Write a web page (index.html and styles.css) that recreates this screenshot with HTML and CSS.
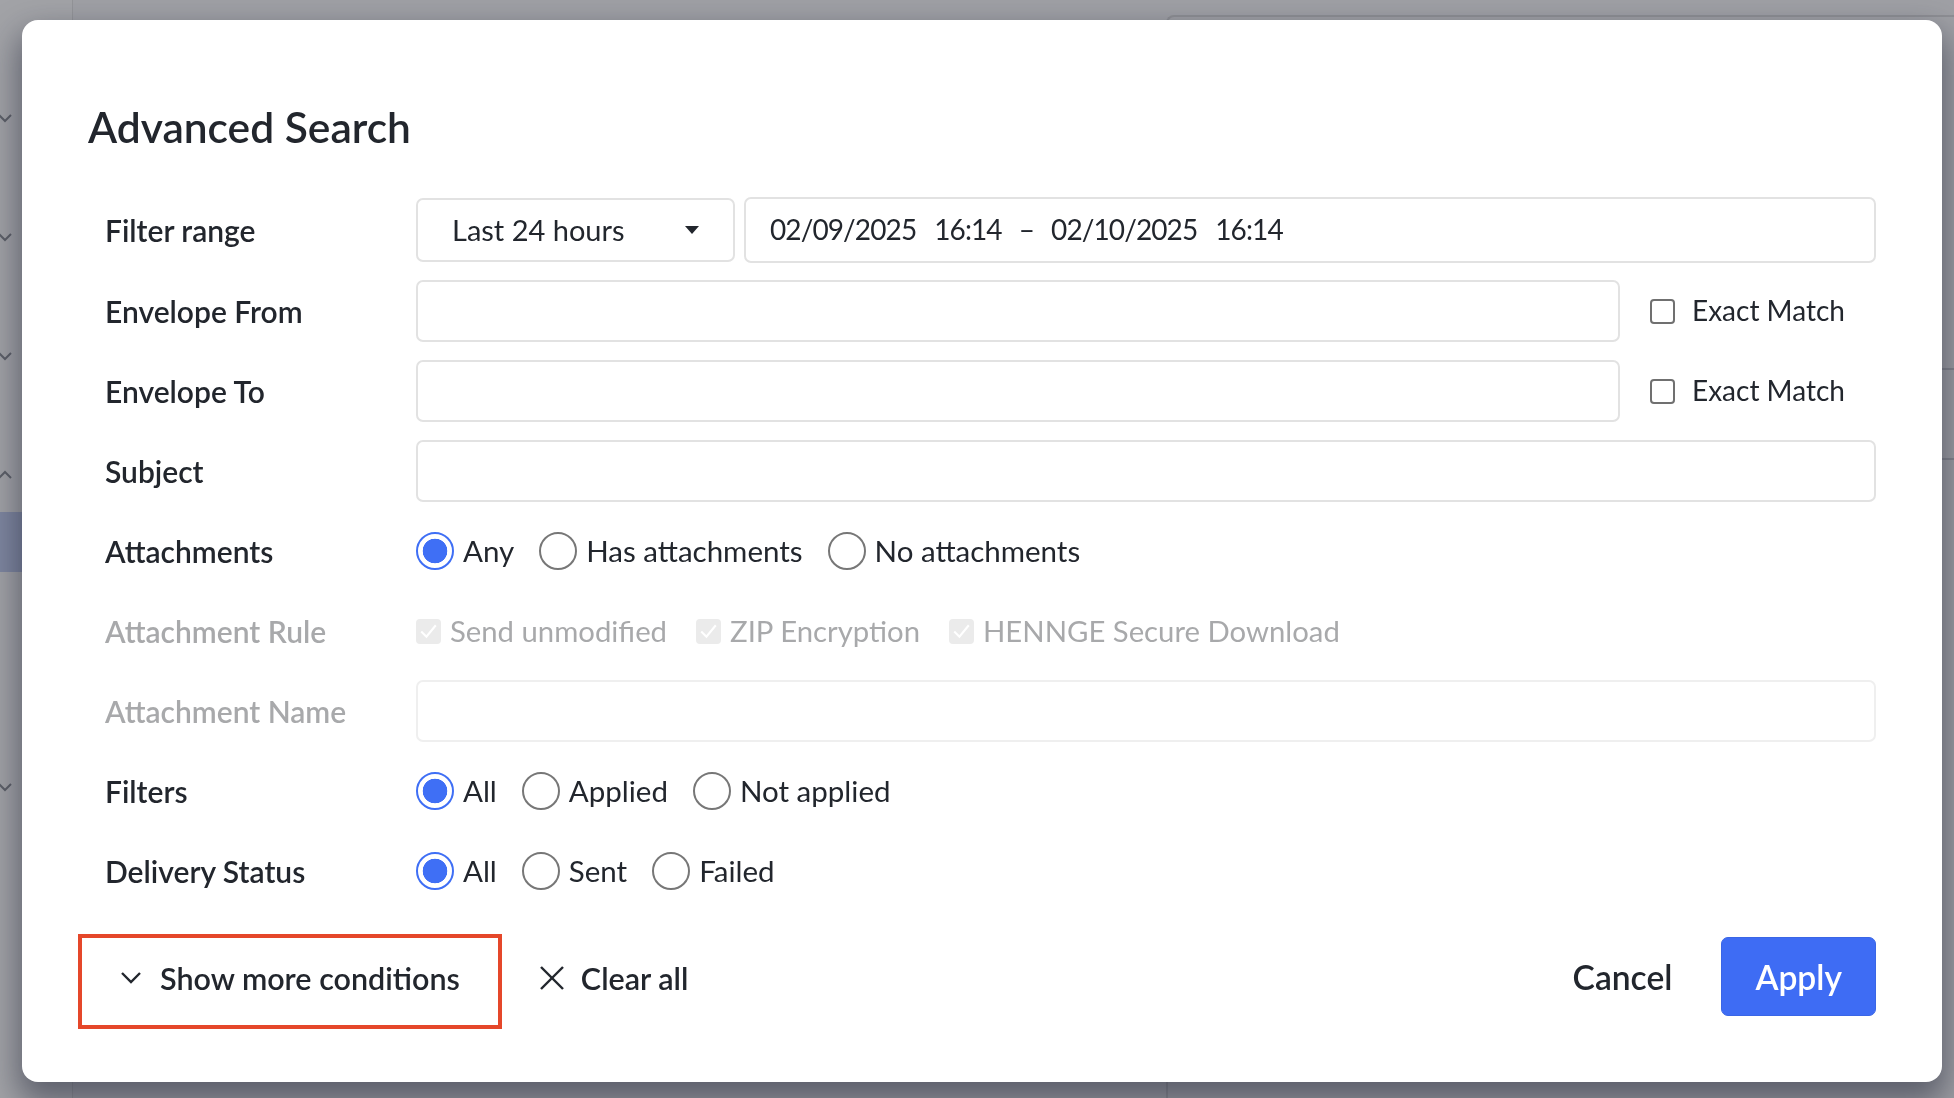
FILE: index.html
```html
<!DOCTYPE html>
<html>
<head>
    <title>Advanced Search</title>
    <link rel="stylesheet" href="styles.css">
</head>
<body>
    <div class="app">
        <aside class="sidebar">
            <svg class="side-chevron first" viewBox="0 0 14 10"><polyline points="1,2 7,8 13,2"/></svg>
            <svg class="side-chevron" viewBox="0 0 14 10"><polyline points="1,2 7,8 13,2"/></svg>
            <svg class="side-chevron" viewBox="0 0 14 10"><polyline points="1,2 7,8 13,2"/></svg>
            <svg class="side-chevron" viewBox="0 0 14 10"><polyline points="1,8 7,2 13,8"/></svg>
            <div class="side-band"></div>
            <svg class="side-chevron last" viewBox="0 0 14 10"><polyline points="1,2 7,8 13,2"/></svg>
        </aside>
        <main class="main">
            <div class="bg-card">
                <div class="bg-row tall"></div>
                <div class="bg-row"></div>
            </div>
        </main>
    </div>

    <div class="modal">
        <h1 class="modal-title">Advanced Search</h1>

        <div class="form">
            <div class="row first">
                <div class="label">Filter range</div>
                <div class="control">
                    <div class="select">
                        <span>Last 24 hours</span>
                        <span class="caret"></span>
                    </div>
                    <div class="date-range">
                        <span>02/09/2025</span><span class="time">16:14</span>
                        <span class="dash">&ndash;</span>
                        <span>02/10/2025</span><span class="time">16:14</span>
                    </div>
                </div>
            </div>

            <div class="row">
                <div class="label">Envelope From</div>
                <div class="control">
                    <input class="text-input" type="text">
                    <label class="exact"><input class="checkbox" type="checkbox"> Exact Match</label>
                </div>
            </div>

            <div class="row">
                <div class="label">Envelope To</div>
                <div class="control">
                    <input class="text-input" type="text">
                    <label class="exact"><input class="checkbox" type="checkbox"> Exact Match</label>
                </div>
            </div>

            <div class="row">
                <div class="label">Subject</div>
                <div class="control">
                    <input class="text-input" type="text">
                </div>
            </div>

            <div class="row">
                <div class="label">Attachments</div>
                <div class="control options">
                    <label class="option"><input class="radio" type="radio" name="att" checked>Any</label>
                    <label class="option"><input class="radio" type="radio" name="att">Has attachments</label>
                    <label class="option"><input class="radio" type="radio" name="att">No attachments</label>
                </div>
            </div>

            <div class="row disabled">
                <div class="label">Attachment Rule</div>
                <div class="control options rules">
                    <span class="option rule">
                        <span class="fake-check"><svg viewBox="0 0 24 24"><polyline points="5,12 10,17 19,6"/></svg></span>Send unmodified
                    </span>
                    <span class="option rule">
                        <span class="fake-check"><svg viewBox="0 0 24 24"><polyline points="5,12 10,17 19,6"/></svg></span>ZIP Encryption
                    </span>
                    <span class="option rule">
                        <span class="fake-check"><svg viewBox="0 0 24 24"><polyline points="5,12 10,17 19,6"/></svg></span>HENNGE Secure Download
                    </span>
                </div>
            </div>

            <div class="row disabled">
                <div class="label">Attachment Name</div>
                <div class="control">
                    <input class="text-input" type="text" disabled>
                </div>
            </div>

            <div class="row">
                <div class="label">Filters</div>
                <div class="control options">
                    <label class="option"><input class="radio" type="radio" name="flt" checked>All</label>
                    <label class="option"><input class="radio" type="radio" name="flt">Applied</label>
                    <label class="option"><input class="radio" type="radio" name="flt">Not applied</label>
                </div>
            </div>

            <div class="row">
                <div class="label">Delivery Status</div>
                <div class="control options">
                    <label class="option"><input class="radio" type="radio" name="dlv" checked>All</label>
                    <label class="option"><input class="radio" type="radio" name="dlv">Sent</label>
                    <label class="option"><input class="radio" type="radio" name="dlv">Failed</label>
                </div>
            </div>
        </div>

        <div class="footer">
            <button class="link-btn more-btn">
                <svg class="icon" viewBox="0 0 22 14"><polyline points="2,2 11,11 20,2"/></svg>
                Show more conditions
            </button>
            <button class="link-btn clear-btn">
                <svg class="icon x-icon" viewBox="0 0 26 26"><line x1="2" y1="2" x2="24" y2="24"/><line x1="24" y1="2" x2="2" y2="24"/></svg>
                Clear all
            </button>
            <div class="spacer"></div>
            <button class="cancel-btn">Cancel</button>
            <button class="apply-btn">Apply</button>
        </div>
    </div>
</body>
</html>
```

FILE: styles.css
```css
body {
    margin: 0;
    background-color: #9fa0a5;
    font-family: "Lato", "Noto Sans", sans-serif;
    color: #22262d;
    height: 100vh;
    overflow: hidden;
    line-height: 1.2;
}

/* page behind the dialog */

.app {
    display: flex;
    height: 100%;
}

.sidebar {
    width: 72px;
    background-color: #a2a3a7;
    border-right: 1px solid #939498;
    display: flex;
    flex-direction: column;
}

.side-chevron {
    width: 14px;
    height: 10px;
    margin-top: 109px;
    margin-left: -2px;
    fill: none;
    stroke: #5d6068;
    stroke-width: 2;
}

.side-chevron.first {
    margin-top: 113px;
}

.side-chevron.last {
    margin-top: 210px;
}

.side-band {
    height: 60px;
    margin-top: 32px;
    background-color: #7f87a0;
}

.main {
    flex: 1;
}

.bg-card {
    margin: 15px 0 0 1093px;
    height: 100%;
    border-top: 2px solid #8e8f94;
    border-left: 2px solid #8e8f94;
    border-top-left-radius: 8px;
}

.bg-row {
    height: 88px;
    border-bottom: 2px solid #85878e;
}

.bg-row.tall {
    height: 351px;
}

/* dialog */

.modal {
    position: fixed;
    left: 22px;
    top: 20px;
    width: 1920px;
    height: 1062px;
    box-sizing: border-box;
    padding: 0 66px 0 62px;
    background-color: #fff;
    border-radius: 16px;
    box-shadow: 0 16px 32px 4px rgba(25, 30, 50, 0.5);
}

.modal-title {
    margin: 81px 0 0 4px;
    font-size: 42.5px;
    font-weight: 600;
    line-height: 1.2;
}

.form {
    margin: 46px 0 0 21px;
    display: flex;
    flex-direction: column;
    gap: 18px;
}

.row {
    display: flex;
    align-items: center;
    height: 62px;
}

.row.first {
    height: 64px;
}

.label {
    width: 311px;
    flex-shrink: 0;
    font-size: 30px;
    font-weight: 600;
}

.row.disabled .label {
    color: #a8a9ab;
}

.control {
    flex: 1;
    display: flex;
    align-items: center;
    height: 100%;
}

.select {
    width: 319px;
    height: 64px;
    box-sizing: border-box;
    padding: 0 35px 0 34px;
    display: flex;
    align-items: center;
    justify-content: space-between;
    border: 2px solid #e2e2e2;
    border-radius: 7px;
    font-size: 29px;
}

.caret {
    width: 0;
    height: 0;
    margin-right: -1px;
    border-left: 7px solid transparent;
    border-right: 7px solid transparent;
    border-top: 8px solid #22262d;
}

.date-range {
    flex: 1;
    height: 66px;
    margin-left: 9px;
    box-sizing: border-box;
    padding: 0 24px;
    display: flex;
    align-items: center;
    border: 2px solid #e2e2e2;
    border-radius: 7px;
    font-size: 28px;
    letter-spacing: -0.9px;
}

.date-range .time {
    margin-left: 18px;
}

.date-range .dash {
    margin: 0 17px;
}

.text-input {
    flex: 1;
    height: 62px;
    box-sizing: border-box;
    margin: 0;
    border: 2px solid #e2e2e2;
    border-radius: 7px;
    outline: none;
    font-family: inherit;
    font-size: 29px;
}

.text-input:disabled {
    background-color: #fff;
    border-color: #efefef;
}

.exact {
    width: 226px;
    margin-left: 30px;
    display: flex;
    align-items: center;
    gap: 17px;
    font-size: 28px;
}

.checkbox {
    appearance: none;
    margin: 0;
    width: 25px;
    height: 25px;
    box-sizing: border-box;
    border: 2px solid #707070;
    border-radius: 4px;
}

.options {
    gap: 25px;
}

.options.rules {
    gap: 29px;
}

.option {
    display: flex;
    align-items: center;
    gap: 9px;
    font-size: 29.5px;
}

.rule {
    font-size: 29.3px;
}

.radio {
    appearance: none;
    margin: 0;
    width: 38px;
    height: 38px;
    box-sizing: border-box;
    border: 2px solid #777;
    border-radius: 50%;
    background-color: #fff;
}

.radio:checked {
    border-color: #3f6ff5;
    background: radial-gradient(circle, #3f6ff5 0, #3f6ff5 12px, #fff 12.6px);
}

.rule {
    color: #a8a9ab;
}

.fake-check {
    width: 25px;
    height: 25px;
    border-radius: 4px;
    background-color: #ebebeb;
    display: flex;
}

.fake-check svg {
    width: 25px;
    height: 25px;
    fill: none;
    stroke: #fff;
    stroke-width: 2;
}

/* footer */

.footer {
    display: flex;
    align-items: center;
    margin: 32px 0 0 -6px;
}

.link-btn {
    display: flex;
    align-items: center;
    background: none;
    border: none;
    padding: 0;
    color: #22262d;
    font-family: inherit;
    font-size: 30.5px;
    font-weight: 600;
    cursor: pointer;
}

.icon {
    fill: none;
    stroke: #22262d;
    stroke-width: 2.4;
}

.more-btn {
    height: 95px;
    box-sizing: border-box;
    padding: 0 38px 8px 38px;
    gap: 18px;
    border: 4px solid #e5472a;
}

.more-btn .icon {
    width: 22px;
    height: 14px;
}

.clear-btn {
    margin: 0 0 8px 37px;
    gap: 16px;
}

.x-icon {
    width: 26px;
    height: 26px;
}

.spacer {
    flex: 1;
}

.cancel-btn {
    margin-bottom: 10px;
    background: none;
    border: none;
    padding: 0;
    color: #22262d;
    font-family: inherit;
    font-size: 33.6px;
    font-weight: 600;
    cursor: pointer;
}

.apply-btn {
    margin: 0 0 10px 49px;
    height: 79px;
    padding: 0 33px;
    background-color: #3e6cf4;
    color: #fff;
    border: 1px solid #3a66e6;
    border-radius: 7px;
    font-family: inherit;
    font-size: 33.6px;
    font-weight: 600;
    cursor: pointer;
}
```
